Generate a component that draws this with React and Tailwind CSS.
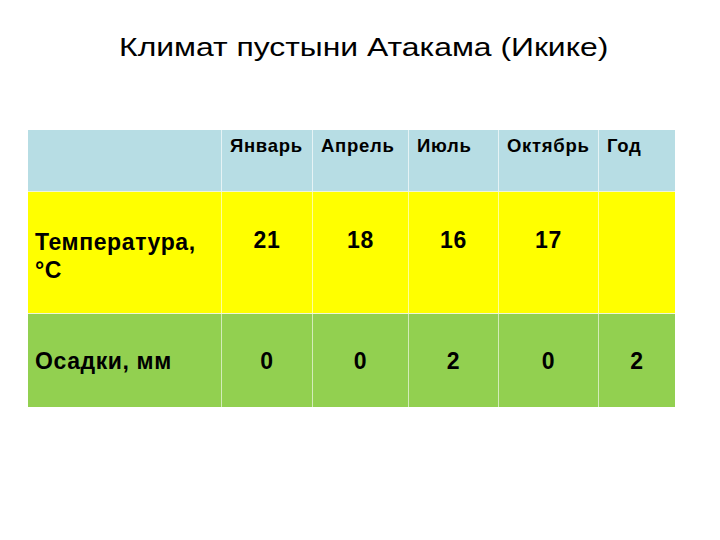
const months = ["Январь", "Апрель", "Июль", "Октябрь", "Год"];

const rows = [
    {
        label: (
            <>
                Температура,
                <br />
                °С
            </>
        ),
        values: ["21", "18", "16", "17", ""],
        bg: "bg-[#ffff00]",
        height: "h-[122px]",
        align: "items-start pt-[34px]",
    },
    {
        label: "Осадки, мм",
        values: ["0", "0", "2", "0", "2"],
        bg: "bg-[#92d050]",
        height: "h-[94px]",
        align: "items-center",
    },
];

const widths = ["w-[91px]", "w-[96px]", "w-[90px]", "w-[100px]", "w-[76px]"];

export default function App() {
    return (
        <div
            className="w-[720px] h-[540px] bg-white text-black"
            style={{ fontFamily: '"Liberation Sans", Arial, sans-serif' }}
        >
            <h1 className="pt-[29px] pl-[8px] text-center text-[25.5px] leading-[36px]">
                <span className="inline-block scale-x-[1.25]">Климат пустыни Атакама (Икике)</span>
            </h1>

            <div className="mt-[65px] ml-[28px] w-[647px] flex flex-col font-bold">
                {/* header */}
                <div className="flex h-[61px] bg-[#b7dde4]">
                    <div className="w-[194px] border-r border-[#e6f3f5]" />
                    {months.map((m, i) => (
                        <div
                            key={m}
                            className={
                                "pl-[8px] pt-[4px] text-[18.5px] tracking-[0.7px] leading-[24px] whitespace-nowrap " +
                                widths[i] +
                                (i < months.length - 1 ? " border-r border-[#e6f3f5]" : "")
                            }
                        >
                            {m}
                        </div>
                    ))}
                </div>

                {rows.map((row, r) => (
                    <div key={r} className={"flex border-t border-[#eef6d8] " + row.bg + " " + row.height}>
                        <div
                            className={
                                "w-[194px] flex items-center pl-[7px] text-[23px] tracking-[0.6px] leading-[28px] border-r border-white/60 whitespace-nowrap " +
                                (r === 0 ? "pt-[6px]" : "")
                            }
                        >
                            <span>{row.label}</span>
                        </div>
                        {row.values.map((v, i) => (
                            <div
                                key={i}
                                className={
                                    "flex justify-center text-[23px] tracking-[0.6px] leading-[28px] " +
                                    row.align +
                                    " " +
                                    widths[i] +
                                    (i < row.values.length - 1 ? " border-r border-white/60" : "")
                                }
                            >
                                {v}
                            </div>
                        ))}
                    </div>
                ))}
            </div>
        </div>
    );
}
